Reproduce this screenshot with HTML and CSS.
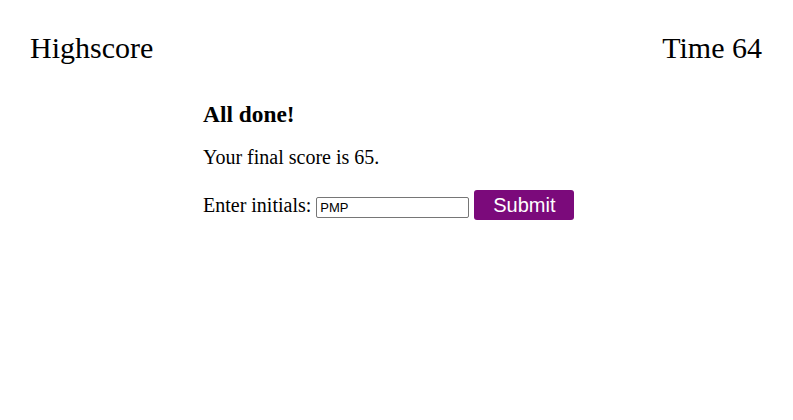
FILE: index.html
```html
<!DOCTYPE html>
<html>
<head>
<meta charset="utf-8">
<link rel="stylesheet" href="styles.css">
</head>
<body>
<header class="top">
  <div class="top-link">Highscore</div>
  <div class="top-time">Time 64</div>
</header>
<main class="panel">
  <h3 class="title">All done!</h3>
  <p class="score">Your final score is 65.</p>
  <form class="entry">
    <label class="entry-label">Enter initials:</label>
    <input class="entry-input" type="text" value="PMP">
    <button class="entry-btn" type="button">Submit</button>
  </form>
</main>
</body>
</html>
```

FILE: styles.css
```css
html, body {
  margin: 0;
  padding: 0;
  background: #fff;
}
body {
  font-family: "Liberation Serif", "Times New Roman", serif;
  font-size: 20px;
  color: #000;
}
.top {
  display: flex;
  justify-content: space-between;
  align-items: baseline;
  padding: 30px 31px 0 30px;
  font-size: 30px;
  line-height: 35px;
}
.panel {
  padding-left: 203px;
}
.title {
  font-size: 23.4px;
  font-weight: bold;
  margin: 36px 0 0;
  line-height: 27px;
}
.score {
  margin: 18px 0 0;
  line-height: 23px;
}
.entry {
  display: flex;
  align-items: center;
  margin-top: 21px;
}
.entry-label {
  margin-right: 5px;
}
.entry-input {
  box-sizing: border-box;
  width: 153px;
  height: 21px;
  padding: 1px 3px;
  border: 1px solid #767676;
  border-radius: 2px;
  font-family: "Liberation Sans", Arial, sans-serif;
  font-size: 13px;
  margin: 4px 0 0;
}
.entry-btn {
  margin-left: 5px;
  width: 100px;
  height: 30px;
  background: #7b0a7b;
  color: #fff;
  border: none;
  border-radius: 3px;
  font-family: "Liberation Sans", Arial, sans-serif;
  font-size: 20px;
  padding: 0;
  line-height: 30px;
}
```
